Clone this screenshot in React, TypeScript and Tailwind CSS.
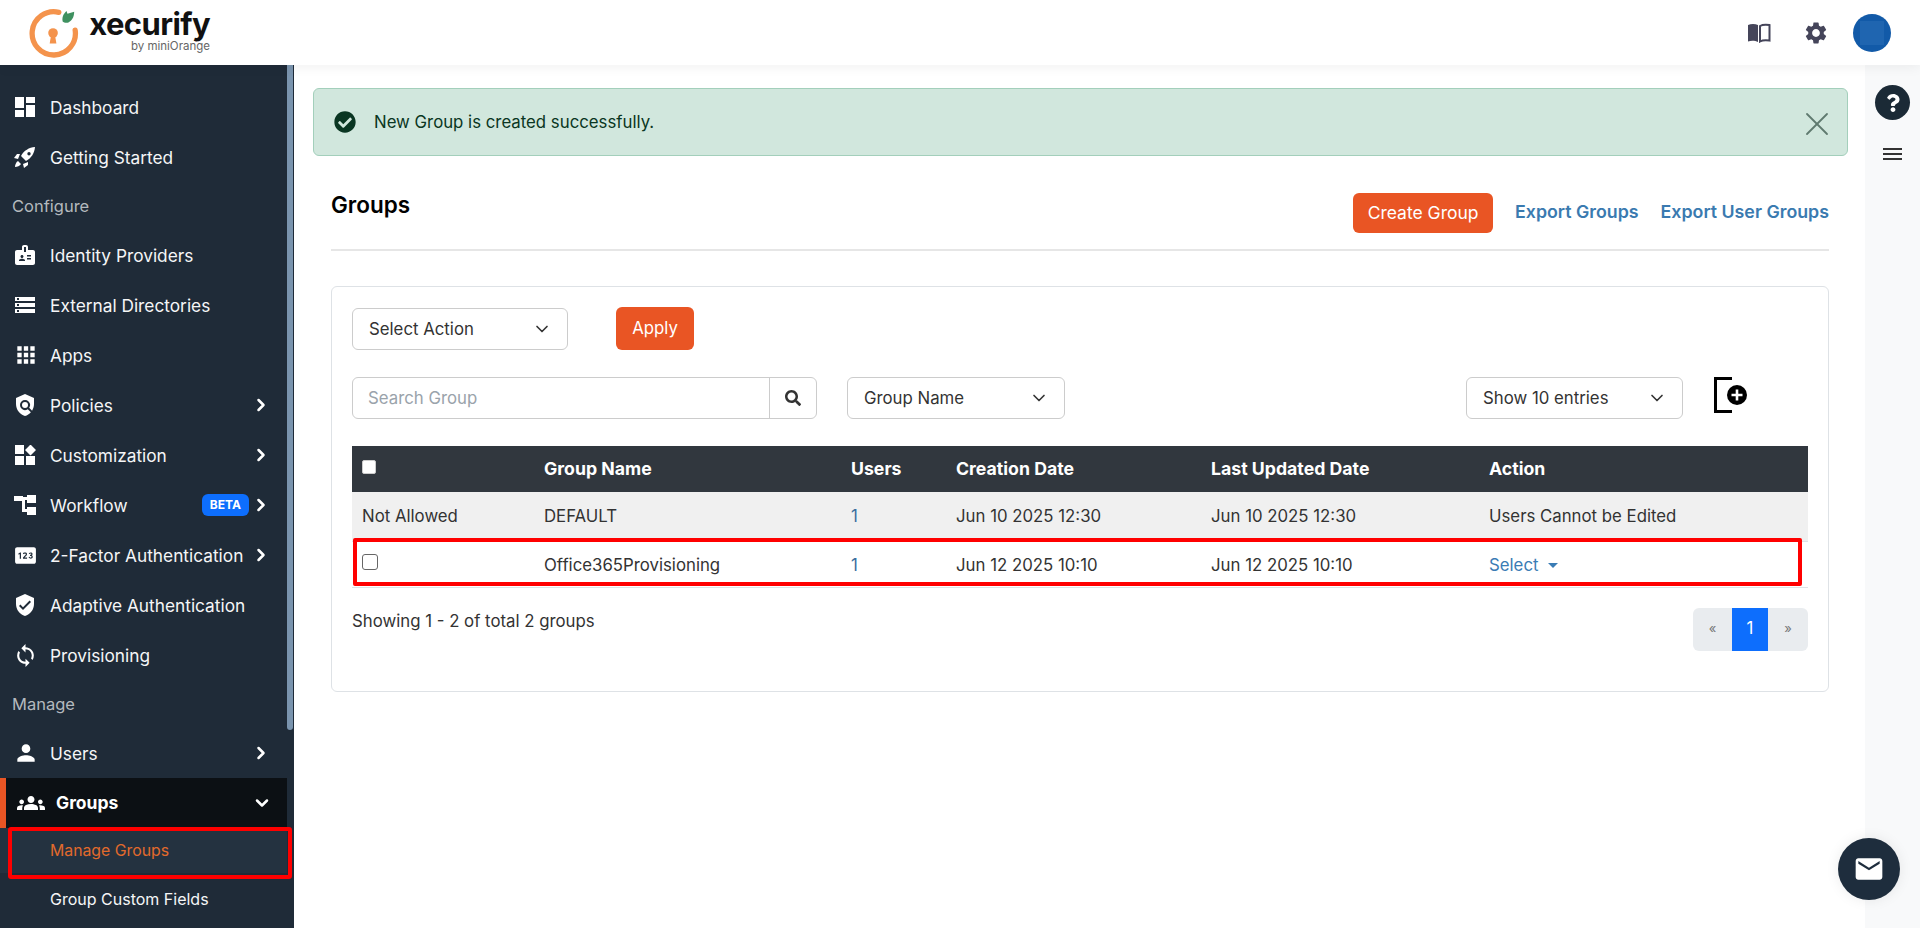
import { ChevronDown, ChevronRight, X } from 'lucide-react';
import {
  MdApps,
  MdBadge,
  MdGroups,
  MdMail,
  MdPerson,
  MdPin,
  MdPolicy,
  MdSettings,
  MdStorage,
  MdSync,
  MdVerifiedUser,
} from 'react-icons/md';
import { FaCheckCircle, FaQuestion, FaSearch } from 'react-icons/fa';
import type { ReactNode } from 'react';

const font = "font-['Inter','Liberation_Sans',sans-serif]";

function DashboardIcon() {
  return (
    <svg viewBox="0 0 20 20" className="ml-[2px] h-[20px] w-[20px]" fill="#fff">
      <path d="M0 0h9v11H0zM0 13h9v7H0zM11 0h9v6h-9zM11 8h9v12h-9z" />
    </svg>
  );
}

function RocketIcon() {
  return (
    <svg viewBox="0 0 22 22" className="ml-[1px] h-[22px] w-[22px]" fill="#fff">
      <path fillRule="evenodd" d="M21 1c-6 .5-11 3.5-14 9l5 5c5.5-3 8.5-8 9-14zm-6 5a1.700 1.700 0 1 1 0 3.400A1.700 1.700 0 0 1 15 6z" />
      <path d="M6 8H3L0 12l4 1zM14 16v3l-4 3-1-4zM4 15c-2 1-3 4-3 6 2 0 5-1 6-3z" />
    </svg>
  );
}

function CustomizeIcon() {
  return (
    <svg viewBox="0 0 21 20" className="ml-[2px] h-[20px] w-[21px]" fill="#fff">
      <path d="M0 0h9v9H0zM0 11h9v9H0zM11 11h9v9h-9zM15.5-.5 21 5l-5.5 5.5L10 5z" />
    </svg>
  );
}

function WorkflowIcon() {
  return (
    <svg viewBox="0 0 22 20" className="ml-[1px] h-[20px] w-[22px]" fill="#fff">
      <path d="M0 1h9v5H0zM9 2h4v3H9zM13 0h9v8h-9zM13 12h9v8h-9zM8 5h3v12H8zM8 14h5v3H8z" />
    </svg>
  );
}

function BookIcon() {
  return (
    <svg viewBox="0 0 24 20" className="h-[20px] w-[24px]">
      <path d="M1 2c3-1.5 7-1.5 10 0v17c-3-1.5-7-1.5-10-.5z" fill="#45455a" />
      <path d="M13 3c2.5-1.5 6-1.5 9.500-1v15.500c-3-.5-7-.5-9.500 1z" fill="none" stroke="#45455a" strokeWidth="2" />
    </svg>
  );
}

function Logo() {
  return (
    <svg viewBox="0 0 52 52" className="h-[50px] w-[50px]">
      <path d="M31 4.500A22.500 22.500 0 1 0 48 23" fill="none" stroke="#f4934c" strokeWidth="5.500" strokeLinecap="round" />
      <path d="M35 14c-1-6 2-9 4-11l1 3 7-2c0 6-3 10-6 11-2 1-5 0-6-1z" fill="#3f9160" />
      <circle cx="25" cy="26" r="5" fill="#f4934c" />
      <path d="M23 28h4l1.500 9h-7z" fill="#f4934c" />
    </svg>
  );
}

type Item = { icon: ReactNode; label: string; arrow?: boolean; beta?: boolean };

const configure: Item[] = [
  { icon: <MdBadge size={24} />, label: 'Identity Providers' },
  { icon: <MdStorage size={24} />, label: 'External Directories' },
  { icon: <MdApps size={26} />, label: 'Apps' },
  { icon: <MdPolicy size={24} />, label: 'Policies', arrow: true },
  { icon: <CustomizeIcon />, label: 'Customization', arrow: true },
  { icon: <WorkflowIcon />, label: 'Workflow', arrow: true, beta: true },
  { icon: <MdPin size={25} />, label: '2-Factor Authentication', arrow: true },
  { icon: <MdVerifiedUser size={24} />, label: 'Adaptive Authentication' },
  { icon: <MdSync size={25} />, label: 'Provisioning' },
];

function NavItem({ item }: { item: Item }) {
  return (
    <div className="flex h-[50px] items-center pl-[13px] pr-[16px] text-[17.300px] text-[#f5f6f7]">
      <span className="flex w-[37px] shrink-0 items-center text-white">{item.icon}</span>
      <span className="mt-[2px] whitespace-nowrap">{item.label}</span>
      {item.beta && (
        <span className="ml-auto mr-[2px] rounded-[6px] bg-[#0d6efd] px-[8px] py-[2px] text-[12px] font-bold text-white">BETA</span>
      )}
      {item.arrow && <ChevronRight size={20} strokeWidth={3} className={item.beta ? 'shrink-0 text-white' : 'ml-auto shrink-0 text-white'} />}
    </div>
  );
}

function Sidebar() {
  return (
    <aside className="relative flex h-[863px] w-[294px] shrink-0 overflow-hidden bg-[#1f2b38]">
      <div className="w-[287px] shrink-0">
        <div className="h-[17px]" />
        <NavItem item={{ icon: <DashboardIcon />, label: 'Dashboard' }} />
        <NavItem item={{ icon: <RocketIcon />, label: 'Getting Started' }} />
        <div className="flex h-[48px] items-center pl-[12px] text-[16.500px] text-[#b4b9be]">Configure</div>
        {configure.map((item) => (
          <NavItem key={item.label} item={item} />
        ))}
        <div className="flex h-[48px] items-center pl-[12px] text-[16.500px] text-[#b4b9be]">Manage</div>
        <NavItem item={{ icon: <MdPerson size={26} />, label: 'Users', arrow: true }} />
        <div className="flex h-[50px] items-center border-l-[6px] border-[#e95524] bg-[#0c1014] pl-[11px] pr-[15px] text-[17.500px] font-bold text-white">
          <span className="flex w-[39px] shrink-0 items-center">
            <MdGroups size={28} />
          </span>
          Groups
          <ChevronDown size={20} strokeWidth={3} className="ml-auto" />
        </div>
        <div className="relative flex h-[45px] items-center bg-[#243240] pl-[50px] text-[15.800px] text-[#e26a2c]">
          Manage Groups
          <div className="absolute left-[8px] top-[-1px] h-[52px] w-[284px] rounded-[3px] border-[4px] border-[#f00]" />
        </div>
        <div className="flex h-[50px] items-center pl-[50px] pt-[2px] text-[16px] text-[#f5f6f7]">Group Custom Fields</div>
      </div>
      <div className="h-[665px] w-[6px] rounded-b-[3px] bg-[#7a94ae]" />
    </aside>
  );
}

function SelectBox({ label, className }: { label: string; className: string }) {
  return (
    <div className={`flex h-[42px] items-center justify-between rounded-[6px] border border-[#ccc] bg-white pl-[16px] pr-[15px] text-[#333] ${className}`}>
      <span className="mt-[2px]">{label}</span>
      <ChevronDown size={20} strokeWidth={2} className="text-[#333]" />
    </div>
  );
}

function Table() {
  return (
    <div className="relative mt-[27px]">
      <table className="w-[1456px] table-fixed border-collapse text-left text-[#333]">
        <colgroup>
          <col className="w-[182px]" />
          <col className="w-[307px]" />
          <col className="w-[105px]" />
          <col className="w-[255px]" />
          <col className="w-[278px]" />
          <col />
        </colgroup>
        <thead>
          <tr className="h-[46px] bg-[#31373e] text-[17.700px] text-white">
            <th className="px-[10px] pb-[4px] align-middle">
              <input type="checkbox" className="block h-[14px] w-[14px] appearance-none rounded-[2px] border border-[#ccc] bg-white" />
            </th>
            <th className="px-[10px] font-bold">Group Name</th>
            <th className="px-[10px] font-bold">Users</th>
            <th className="px-[10px] font-bold">Creation Date</th>
            <th className="px-[10px] font-bold">Last Updated Date</th>
            <th className="px-[10px] font-bold">Action</th>
          </tr>
        </thead>
        <tbody>
          <tr className="h-[49px] border-b border-[#dee2e6] bg-[#f0f0f0]">
            <td className="px-[10px]">Not Allowed</td>
            <td className="px-[10px]">DEFAULT</td>
            <td className="px-[10px] text-[#3a6d9e]">1</td>
            <td className="px-[10px]">Jun 10 2025 12:30</td>
            <td className="px-[10px]">Jun 10 2025 12:30</td>
            <td className="px-[10px]">Users Cannot be Edited</td>
          </tr>
          <tr className="h-[46px] border-b border-[#dee2e6] bg-white">
            <td className="px-[10px] pb-[4px]">
              <input type="checkbox" className="block h-[16px] w-[16px] appearance-none rounded-[3px] border border-[#666] bg-white" />
            </td>
            <td className="px-[10px] pt-[3px]">Office365Provisioning</td>
            <td className="px-[10px] pt-[3px] text-[#3a6d9e]">1</td>
            <td className="px-[10px] pt-[3px]">Jun 12 2025 10:10</td>
            <td className="px-[10px] pt-[3px]">Jun 12 2025 10:10</td>
            <td className="px-[10px] pt-[3px] text-[#3a7cb5]">
              Select
              <span className="ml-[10px] inline-block translate-y-[-3px] border-x-[5px] border-t-[5px] border-x-transparent border-t-[#3a7cb5]" />
            </td>
          </tr>
        </tbody>
      </table>
      <div className="absolute left-[1px] top-[92px] h-[48px] w-[1449px] rounded-[2px] border-[4px] border-[#f00]" />
    </div>
  );
}

function Content() {
  return (
    <main className="min-w-0 flex-1 pt-[23px]">
      <div className="ml-[19px] mr-[17px] flex h-[68px] items-center rounded-[6px] border border-[#a3cfbb] bg-[#d1e7dd] pl-[20px] pr-[10px] text-[#0a3622]">
        <FaCheckCircle size={22} className="text-[#0a3622]" />
        <span className="ml-[18px] mt-[2px]">New Group is created successfully.</span>
        <X size={40} strokeWidth={1.100} className="ml-auto mt-[3px] text-[#5f7a6f]" />
      </div>
      <div className="ml-[37px] mr-[36px]">
        <div className="flex h-[95px] items-start border-b-2 border-[#e6e6e6] pt-[37px]">
          <h1 className="mt-[-2px] text-[22.500px] font-semibold leading-[28px] text-black">Groups</h1>
          <div className="ml-auto flex items-center">
            <button className="h-[40px] w-[140px] rounded-[6px] bg-[#e95524] text-[17.500px] text-white">Create Group</button>
            <span className="ml-[22px] mt-[-2px] text-[17.800px] font-semibold text-[#3a7ab0]">Export Groups</span>
            <span className="ml-[22px] mt-[-2px] text-[17.800px] font-semibold text-[#3a7ab0]">Export User Groups</span>
          </div>
        </div>
        <section className="mt-[35px] h-[406px] rounded-[6px] border border-[#dee2e6] px-[20px] pt-[20px]">
          <div className="flex items-center">
            <SelectBox label="Select Action" className="w-[216px]" />
            <button className="ml-[48px] h-[43px] w-[78px] rounded-[6px] bg-[#e95524] text-white">Apply</button>
          </div>
          <div className="mt-[27px] flex items-start">
            <div className="flex h-[42px] w-[465px] rounded-[6px] border border-[#ccc]">
              <span className="flex flex-1 items-center pl-[15px] pt-[2px] text-[#9aa3ab]">Search Group</span>
              <span className="flex w-[47px] items-center justify-center border-l border-[#ccc] text-[#333]">
                <FaSearch size={16} />
              </span>
            </div>
            <SelectBox label="Group Name" className="ml-[30px] w-[218px]" />
            <SelectBox label="Show 10 entries" className="ml-auto w-[217px]" />
            <svg viewBox="0 0 33 36" className="ml-[31px] mr-[61px] h-[36px] w-[33px]">
              <path d="M18 1.500H1.500v33H18" fill="none" stroke="#000" strokeWidth="3" />
              <circle cx="23" cy="18" r="10" fill="#000" />
              <path d="M23 12.500v11M17.500 18h11" stroke="#fff" strokeWidth="2.600" />
            </svg>
          </div>
          <Table />
          <div className="mt-[20px] flex items-start text-[#333]">
            <span className="mt-[1px]">Showing 1 - 2 of total 2 groups</span>
            <div className="ml-auto flex h-[43px] overflow-hidden rounded-[6px] bg-[#e9ecef] text-[#777]">
              <span className="flex w-[39px] items-center justify-center text-[13px]">«</span>
              <span className="flex w-[36px] items-center justify-center bg-[#0d6efd] text-white">1</span>
              <span className="flex w-[40px] items-center justify-center text-[13px]">»</span>
            </div>
          </div>
        </section>
      </div>
    </main>
  );
}

export default function App() {
  return (
    <div className={`${font} relative flex h-[928px] w-[1920px] flex-col overflow-hidden bg-white text-[16.800px]`}>
      <header className="relative z-10 flex h-[65px] shrink-0 items-center bg-white pl-[29px] pr-[29px] shadow-[0_2px_12px_rgba(0,0,0,0.06)]">
        <Logo />
        <div className="mb-[3px] ml-[13px] flex w-[118px] flex-col items-end">
          <span className="text-[31px] font-bold leading-[30px] tracking-[-0.6px] text-[#111]">xecurify</span>
          <span className="text-[11.500px] leading-[14px] text-[#666]">by miniOrange</span>
        </div>
        <div className="ml-auto flex items-center text-[#45455a]">
          <BookIcon />
          <MdSettings size={26} className="ml-[32px]" />
          <span className="ml-[24px] flex h-[38px] w-[38px] items-center justify-center rounded-full bg-[#125aa8]">
            <span className="h-[24px] w-[24px] bg-[#1f65b0]" />
          </span>
        </div>
      </header>
      <div className="flex min-h-0 flex-1">
        <Sidebar />
        <Content />
        <div className="flex w-[55px] shrink-0 flex-col items-center bg-[#f8f9fa] pt-[20px]">
          <span className="flex h-[35px] w-[35px] items-center justify-center rounded-full bg-[#1b2a36] text-white">
            <FaQuestion size={18} />
          </span>
          <span className="mt-[28px] flex h-[12px] w-[19px] flex-col justify-between">
            <span className="h-[2px] bg-[#333]" />
            <span className="h-[2px] bg-[#333]" />
            <span className="h-[2px] bg-[#333]" />
          </span>
        </div>
      </div>
      <div className="absolute left-[1838px] top-[838px] flex h-[62px] w-[62px] items-center justify-center rounded-full bg-[#1e2d3d] text-white shadow-[0_0_14px_rgba(0,0,0,0.08)]">
        <MdMail size={32} />
      </div>
    </div>
  );
}
